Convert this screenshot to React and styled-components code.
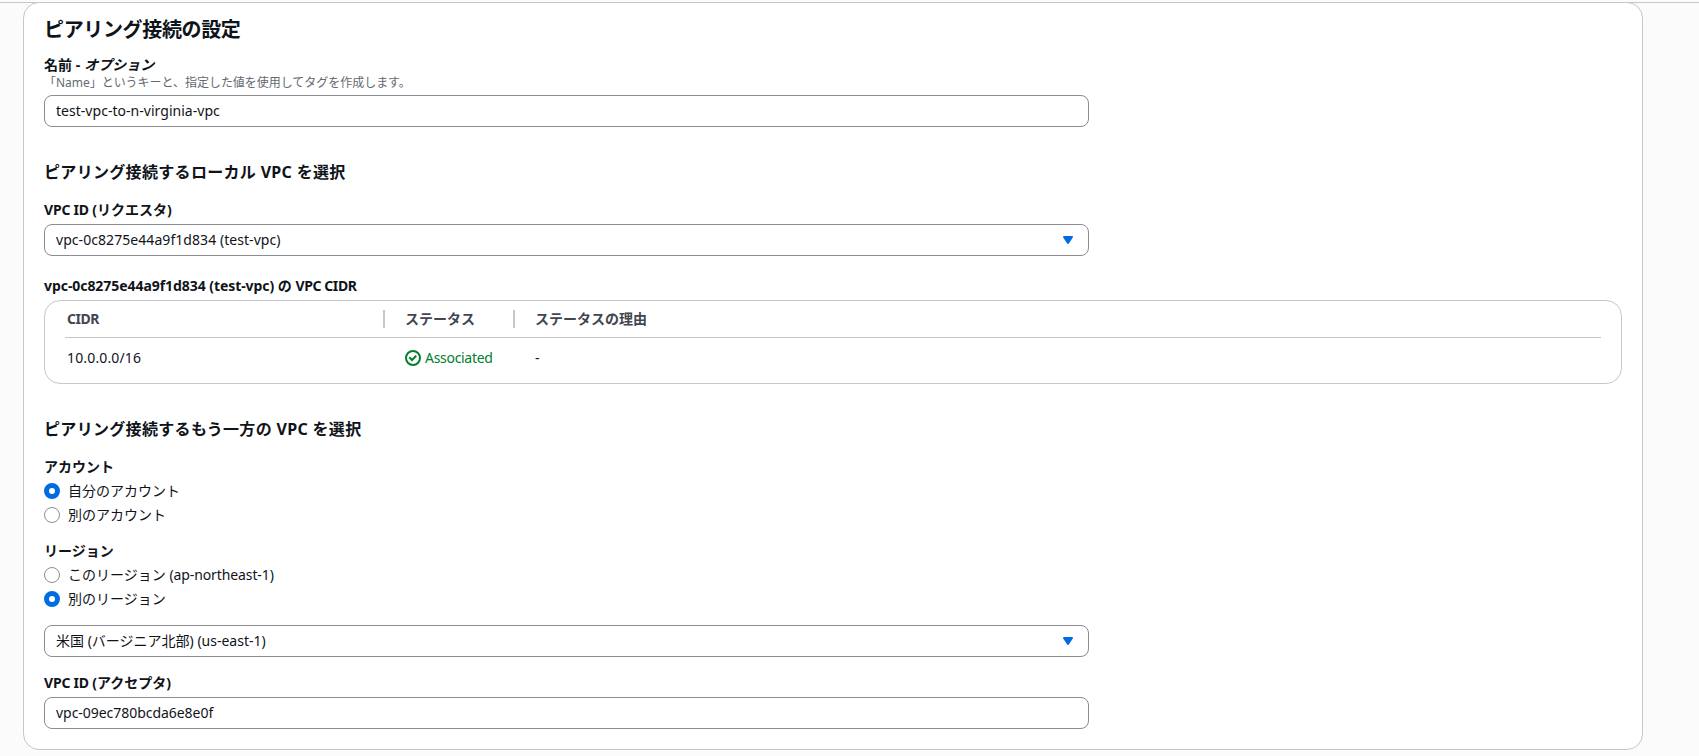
import styled, { createGlobalStyle } from "styled-components";

const GlobalStyle = createGlobalStyle`
  * {
    box-sizing: border-box;
  }

  body {
    margin: 0;
    background: #fbfbfb;
    color: #0f141a;
    font-family: "Noto Sans", "Noto Sans CJK JP", sans-serif;
    font-size: 14px;
    line-height: 20px;
  }
`;

const Page = styled.main`
  height: 756px;
  padding-top: 2px;
  overflow: hidden;
`;

const Content = styled.div`
  padding: 0 56px 0 23px;
  border-top: 1px solid #c6c6cd;
`;

const Container = styled.section`
  height: 748px;
  margin-top: -1px;
  padding: 15px 20px 20px;
  background: #ffffff;
  border: 1px solid #c6c6cd;
  border-radius: 16px;
`;

const Title = styled.h2`
  margin: 0 0 13px;
  font-size: 20px;
  line-height: 24px;
  font-weight: 700;
  letter-spacing: -0.35px;
`;

const SectionTitle = styled.h3`
  margin: 35px 0 18px;
  font-size: 16px;
  line-height: 20px;
  font-weight: 700;
  letter-spacing: 0.32px;
`;

const Latin = styled.span`
  letter-spacing: ${({ $spacing = 0 }) => $spacing}px;
`;

const Field = styled.div`
  margin-top: ${({ $top = 0 }) => $top}px;
`;

const Label = styled.div`
  margin-bottom: ${({ $bottom = 4 }) => $bottom}px;
  font-weight: 700;
`;

const Hint = styled.div`
  margin-bottom: 4px;
  color: #656871;
  font-size: 12px;
  line-height: 16px;
  letter-spacing: -0.03px;
`;

const Control = styled.div`
  display: flex;
  align-items: center;
  justify-content: space-between;
  width: 1045px;
  height: 32px;
  padding: 0 12px 0 11px;
  background: #ffffff;
  border: 1px solid #8c8c94;
  border-radius: 8px;
`;

const Table = styled.div`
  height: 84px;
  padding: 0 20px;
  border: 1px solid #c6c6cd;
  border-radius: 16px;
`;

const TableRow = styled.div`
  display: grid;
  grid-template-columns: 320px 130px 1fr;
  align-items: center;
  height: 40px;
`;

const TableHead = styled(TableRow)`
  height: 37px;
  color: #424650;
  font-weight: 700;
  border-bottom: 1px solid #c6c6cd;
`;

const Cell = styled.div`
  display: flex;
  align-items: center;
  justify-content: space-between;
  padding-left: ${({ $first }) => ($first ? 2 : 20)}px;
`;

const Divider = styled.span`
  width: 2px;
  height: 18px;
  background: #c6c6cd;
`;

const Status = styled.span`
  display: flex;
  align-items: center;
  gap: 4px;
  color: #00802f;
`;

const RadioList = styled.div`
  display: flex;
  flex-direction: column;
  gap: 4px;
`;

const RadioRow = styled.div`
  display: flex;
  align-items: center;
  gap: 8px;
  height: 20px;
`;

const RadioMark = styled.span`
  width: 16px;
  height: 16px;
  background: #ffffff;
  border: ${({ $checked }) => ($checked ? "5px solid #006ce0" : "1px solid #8c8c94")};
  border-radius: 50%;
`;

const Caret = () => (
  <svg width="16" height="16" viewBox="0 0 16 16">
    <path d="M4 5h8l-4 6-4-6z" fill="#006ce0" stroke="#006ce0" strokeWidth="2" strokeLinejoin="round" />
  </svg>
);

const CheckIcon = () => (
  <svg width="16" height="16" viewBox="0 0 16 16" fill="none" stroke="currentColor" strokeWidth="2">
    <circle cx="8" cy="8" r="7" />
    <path d="m5 8 2 2 3.521-3.521" strokeLinecap="square" />
  </svg>
);

const Radio = ({ checked, children }) => (
  <RadioRow role="radio" aria-checked={!!checked}>
    <RadioMark $checked={checked} />
    <span>{children}</span>
  </RadioRow>
);

export default function App() {
  return (
    <Page>
      <GlobalStyle />
      <Content>
        <Container>
          <Title>ピアリング接続の設定</Title>
          <Field>
            <Label $bottom={0}>
              名前 <Latin $spacing={0.5}>-</Latin> <i>オプション</i>
            </Label>
            <Hint>「Name」というキーと、指定した値を使用してタグを作成します。</Hint>
            <Control>
              <Latin $spacing={0.03}>test-vpc-to-n-virginia-vpc</Latin>
            </Control>
          </Field>

          <SectionTitle>ピアリング接続するローカル VPC を選択</SectionTitle>
          <Field>
            <Label>
              <Latin $spacing={-0.2}>VPC ID (</Latin>リクエスタ)
            </Label>
            <Control>
              <Latin $spacing={0.06}>vpc-0c8275e44a9f1d834 (test-vpc)</Latin>
              <Caret />
            </Control>
          </Field>
          <Field $top={20}>
            <Label>
              <Latin $spacing={-0.06}>vpc-0c8275e44a9f1d834 (test-vpc)</Latin> の{" "}
              <Latin $spacing={-0.4}>VPC CIDR</Latin>
            </Label>
            <Table>
              <TableHead>
                <Cell $first>
                  <Latin $spacing={-0.5}>CIDR</Latin>
                  <Divider />
                </Cell>
                <Cell>
                  ステータス
                  <Divider />
                </Cell>
                <Cell>ステータスの理由</Cell>
              </TableHead>
              <TableRow>
                <Cell $first>
                  <Latin $spacing={0.15}>10.0.0.0/16</Latin>
                </Cell>
                <Cell>
                  <Status>
                    <CheckIcon />
                    <Latin $spacing={-0.3}>Associated</Latin>
                  </Status>
                </Cell>
                <Cell>-</Cell>
              </TableRow>
            </Table>
          </Field>

          <SectionTitle>ピアリング接続するもう一方の VPC を選択</SectionTitle>
          <Field>
            <Label>アカウント</Label>
            <RadioList role="radiogroup">
              <Radio checked>自分のアカウント</Radio>
              <Radio>別のアカウント</Radio>
            </RadioList>
          </Field>
          <Field $top={16}>
            <Label>リージョン</Label>
            <RadioList role="radiogroup">
              <Radio>
                このリージョン <Latin $spacing={-0.1}>(ap-northeast-1)</Latin>
              </Radio>
              <Radio checked>別のリージョン</Radio>
            </RadioList>
          </Field>
          <Field $top={16}>
            <Control>
              <span>
                米国 (バージニア北部) <Latin>(us-east-1)</Latin>
              </span>
              <Caret />
            </Control>
          </Field>
          <Field $top={16}>
            <Label>
              <Latin $spacing={-0.2}>VPC ID (</Latin>アクセプタ)
            </Label>
            <Control>
              <Latin $spacing={-0.04}>vpc-09ec780bcda6e8e0f</Latin>
            </Control>
          </Field>
        </Container>
      </Content>
    </Page>
  );
}
